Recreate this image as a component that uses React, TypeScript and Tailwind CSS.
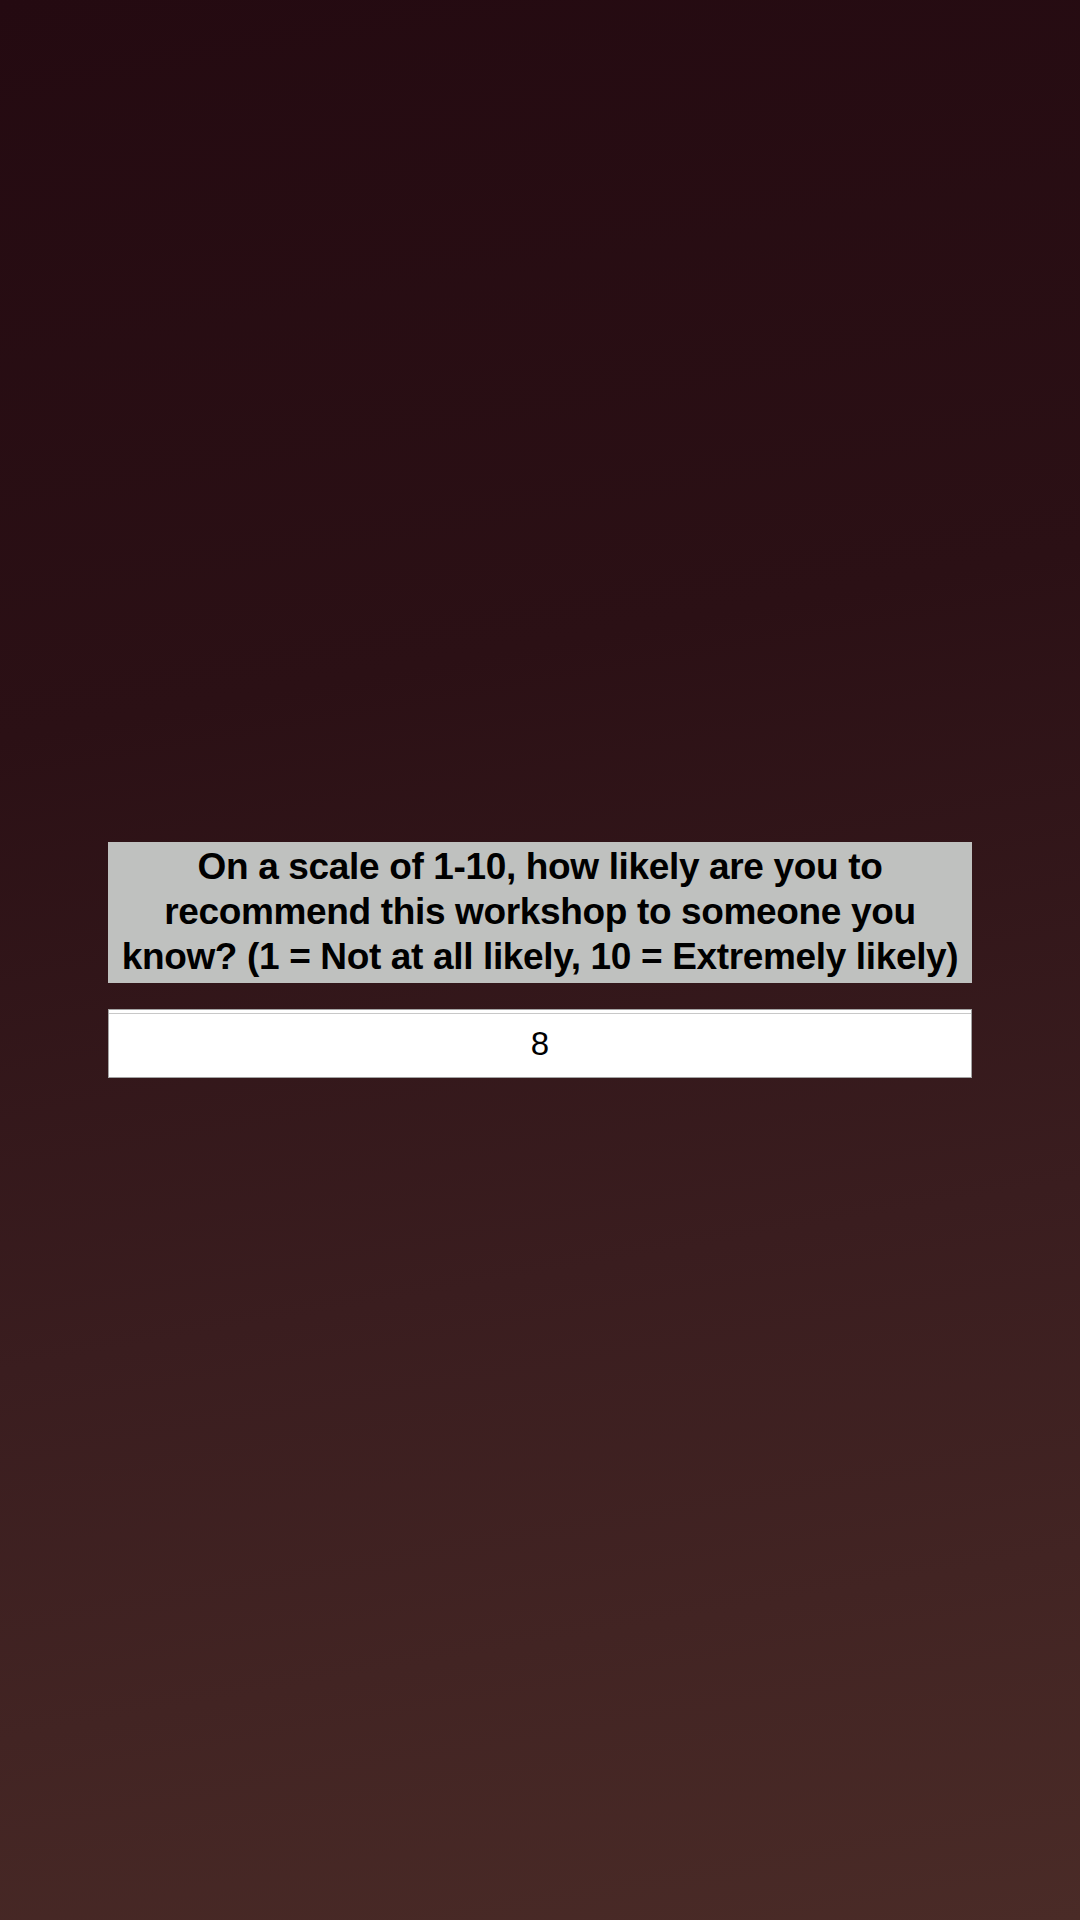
import { useState } from 'react';

export default function App() {
  const [value, setValue] = useState('8');

  return (
    <div className="min-h-[1920px] w-full flex flex-col items-center justify-center bg-[linear-gradient(170deg,#240a11_0%,#2b1015_35%,#3a1d1f_65%,#4a2b27_100%)] font-['Liberation_Sans',Arial,sans-serif]">
      <div className="w-[864px] flex flex-col gap-[26px]">
        {/* Question label */}
        <div className="bg-[#bfc1bf] h-[141px] pt-[2px] text-center text-black font-bold text-[37px] leading-[45px] tracking-[-0.35px]">
          On a scale of 1-10, how likely are you to recommend this workshop to someone you know? (1 = Not at all likely, 10 = Extremely likely)
        </div>

        {/* Answer input */}
        <input
          type="text"
          value={value}
          onChange={(e) => setValue(e.target.value)}
          className="h-[69px] w-full bg-white border border-[#a3a3a3] shadow-[inset_0_3px_0_#ffffff,inset_0_4px_0_#c8c8c8] text-center text-black text-[33px] outline-none font-['Liberation_Sans',Arial,sans-serif]"
        />
      </div>
    </div>
  );
}
